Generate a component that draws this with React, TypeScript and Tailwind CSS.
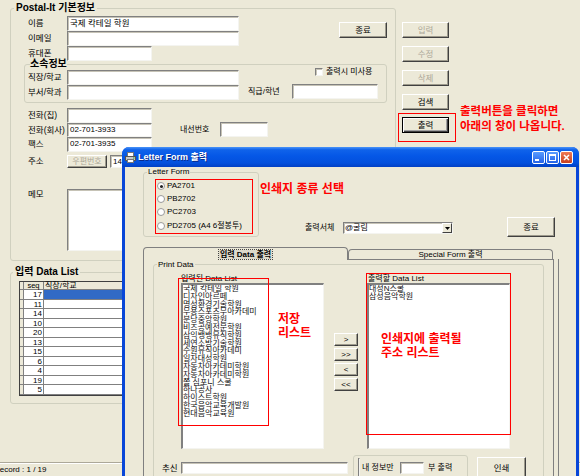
import React from "react";

const sunken =
  "bg-white border border-t-[#808080] border-l-[#808080] border-r-[#f4f4f0] border-b-[#f4f4f0] shadow-[inset_1px_1px_0_#c6c3b6]";

function Input({ className = "", children }: { className?: string; children?: React.ReactNode }) {
  return (
    <div
      className={
        "flex items-center overflow-hidden whitespace-nowrap pl-[2px] text-[8.5px] leading-none text-black " +
        sunken +
        " " +
        className
      }
    >
      {children}
    </div>
  );
}

function Btn({
  className = "",
  disabled = false,
  focused = false,
  children,
}: {
  className?: string;
  disabled?: boolean;
  focused?: boolean;
  children?: React.ReactNode;
}) {
  const frame = focused
    ? "border border-black shadow-[inset_1px_1px_0_#ffffff,inset_-1px_-1px_0_#404040,inset_-2px_-2px_0_#a0a0a0]"
    : "border border-t-white border-l-white border-r-[#404040] border-b-[#404040] shadow-[inset_-1px_-1px_0_#9d9a8c]";
  return (
    <div
      className={
        "flex items-center justify-center bg-[#ece9d8] text-[8.5px] leading-none whitespace-nowrap shrink-0 " +
        (disabled ? "text-[#aca899] " : "text-black ") +
        frame +
        " " +
        className
      }
    >
      {children}
    </div>
  );
}

function Check() {
  return <span className={"w-[8px] h-[8px] shrink-0 " + sunken} />;
}

function Radio({ checked = false }: { checked?: boolean }) {
  return (
    <span className="w-[8px] h-[8px] shrink-0 rounded-full border border-[#9a9a9a] bg-white flex items-center justify-center">
      {checked && <span className="w-[3px] h-[3px] rounded-full bg-[#222]" />}
    </span>
  );
}

const leftList = [
  "국제 칵테일 학원",
  "디자인아르떼",
  "명성환경기술학원",
  "무용스포츠무아카데미",
  "분당중앙학원",
  "비즈공예전문학원",
  "삼익뱅뱅뮤직학원",
  "세연소방기술학원",
  "수원뮤직아카데미",
  "일자대성학원",
  "자동차아카데미학원",
  "자동차아카데미학원",
  "쫄 심포니 스쿨",
  "하나공사",
  "하이스트학원",
  "한국음악교육개발원",
  "현대음악교육원",
];

const rightList = ["대성N스쿨", "삼성음악학원"];

const seqs = [17, 11, 14, 10, 20, 13, 15, 6, 4, 19, 5];

function Label({ children, className = "" }: { children: React.ReactNode; className?: string }) {
  return <span className={"text-[8.5px] leading-none whitespace-nowrap shrink-0 " + className}>{children}</span>;
}

function Dialog() {
  return (
    <div className="absolute left-[122px] top-[147px] w-[457px] h-[340px] flex flex-col rounded-t-[7px] overflow-hidden bg-[#0846d8]">
      {/* title bar */}
      <div className="h-[20px] shrink-0 flex items-center bg-[linear-gradient(180deg,#4a94f8_0%,#1063ea_14%,#0557e6_45%,#0350dd_80%,#0240c4_100%)]">
        <svg className="ml-[3px] shrink-0" width="11" height="11" viewBox="0 0 11 11">
          <rect x="2.5" y="0.5" width="6" height="4" fill="#fff" stroke="#777" />
          <rect x="0.5" y="4.5" width="10" height="4" fill="#c8c8c8" stroke="#555" />
          <rect x="2.5" y="7.5" width="6" height="3" fill="#fff" stroke="#777" />
          <rect x="8" y="5.5" width="1.5" height="1" fill="#3a3" />
        </svg>
        <span className="ml-[2px] text-white font-bold text-[9px] leading-none whitespace-nowrap [text-shadow:1px_1px_0_#0a2a8a]">
          Letter Form 출력
        </span>
        <div className="ml-auto mr-[6px] flex gap-[1px]">
          <div className="w-[13px] h-[13px] rounded-[2px] border border-white bg-[linear-gradient(180deg,#5a9cff,#2563e8)] flex items-end justify-start pl-[2px] pb-[2px]">
            <span className="w-[4px] h-[2px] bg-white" />
          </div>
          <div className="w-[13px] h-[13px] rounded-[2px] border border-white bg-[linear-gradient(180deg,#5a9cff,#2563e8)] flex items-center justify-center">
            <span className="w-[7px] h-[7px] border border-white border-t-2" />
          </div>
          <div className="w-[13px] h-[13px] rounded-[2px] border border-white bg-[linear-gradient(180deg,#f07a55,#c8401e)] flex items-center justify-center">
            <svg width="7" height="7" viewBox="0 0 7 7">
              <path d="M1 1 L6 6 M6 1 L1 6" stroke="#fff" strokeWidth="1.6" />
            </svg>
          </div>
        </div>
      </div>

      {/* client */}
      <div className="flex-1 mx-[3px] bg-[#ece9d8] flex flex-col">
        <div className="flex items-start">
          <fieldset className="ml-[18px] w-[116px] h-[70px] shrink-0 border border-[#d0d0bf] rounded-[3px]">
            <legend className="ml-[3px] px-[1px] text-[8px] leading-[10px]">Letter Form</legend>
            <div className="ml-[11px] mt-[2px] w-[98px] h-[55px] border border-[#ff0000] flex flex-col pl-[1px]">
              <div className="h-[12px] flex items-center gap-[2px]">
                <Radio checked />
                <span className="text-[8px] leading-none">PA2701</span>
              </div>
              <div className="h-[13px] flex items-center gap-[2px]">
                <Radio />
                <span className="text-[8px] leading-none">PB2702</span>
              </div>
              <div className="h-[14px] flex items-center gap-[2px]">
                <Radio />
                <span className="text-[8px] leading-none">PC2703</span>
              </div>
              <div className="h-[14px] flex items-center gap-[2px]">
                <Radio />
                <span className="text-[8px] leading-none whitespace-nowrap">PD2705 (A4 6절봉투)</span>
              </div>
            </div>
          </fieldset>
          <div className="ml-[1px] w-[194px] flex flex-col shrink-0">
            <div className="mt-[16px] text-[12px] font-bold leading-[12px] text-[#ff0000] whitespace-nowrap">
              인쇄지 종류 선택
            </div>
            <div className="mt-[27px] h-[12px] flex items-center">
              <span className="ml-[45px] w-[38px] text-[8px] leading-none whitespace-nowrap">출력서체</span>
              <div className={"w-[110px] h-[12px] flex items-center " + sunken}>
                <span className="flex-1 pl-[1px] text-[8px] leading-none">@굴림</span>
                <div className="w-[10px] h-[10px] bg-[#ece9d8] border border-t-white border-l-white border-r-[#404040] border-b-[#404040] flex items-center justify-center">
                  <svg width="5" height="3" viewBox="0 0 5 3">
                    <path d="M0 0 H5 L2.5 3 Z" fill="#000" />
                  </svg>
                </div>
              </div>
            </div>
          </div>
          <Btn className="ml-[53px] mt-[50px] w-[48px] h-[20px]">종료</Btn>
        </div>

        {/* tabs */}
        <div className="mt-[10px] ml-[18px] flex items-end h-[12px]">
          <div className="relative z-10 mb-[-1px] w-[205px] h-[13px] border border-b-0 border-[#7f7f7f] rounded-t-[4px] bg-[#ece9d8] flex items-center justify-center">
            <span className="px-[1px] text-[8px] font-bold leading-[9px] bg-[#dcd9cb] [outline:1px_dotted_#444]">
              입력 Data 출력
            </span>
          </div>
          <div className="w-[205px] h-[10px] border border-b-0 border-[#7f7f7f] rounded-t-[4px] bg-[#ece9d8] flex items-center justify-center">
            <span className="text-[8px] leading-none">Special Form 출력</span>
          </div>
        </div>

        {/* panel */}
        <div className="ml-[18px] w-[411px] flex-1 border border-[#7f7f7f] shadow-[4px_0_0_0_#ece9d8,5px_0_0_0_#808080] flex flex-col">
          <fieldset className="ml-[9px] w-[391px] h-[260px] border border-[#d0d0bf] rounded-[3px]">
            <legend className="ml-[3px] px-[1px] text-[8px] leading-[9px]">Print Data</legend>
            <div className="mt-[5px] flex items-start">
              {/* left list */}
              <div className="relative ml-[27px] flex flex-col">
                <span className="text-[8px] leading-[9px] whitespace-nowrap">입력된 Data List</span>
                <div className="w-[143px] h-[166px] bg-white border-t-2 border-l-2 border-t-[#808080] border-l-[#808080] border-r border-b border-r-[#f4f4f0] border-b-[#f4f4f0] overflow-hidden">
                  {leftList.map((t, i) => (
                    <div key={i} className="text-[8px] leading-[7.8px] whitespace-nowrap text-[#111]">
                      {t}
                    </div>
                  ))}
                </div>
                <div className="absolute left-[-3px] top-[4px] w-[91px] h-[148px] border border-[#ff0000]" />
                <div className="absolute left-[97px] top-[38px] text-[12px] font-bold leading-[14px] text-[#ff0000] whitespace-nowrap">
                  저장
                  <br />
                  리스트
                </div>
              </div>
              {/* arrows */}
              <div className="ml-[10px] mt-[59px] flex flex-col gap-[2px]">
                <Btn className="w-[24px] h-[13px] text-[8px]">&gt;</Btn>
                <Btn className="w-[24px] h-[13px] text-[8px]">&gt;&gt;</Btn>
                <Btn className="w-[24px] h-[13px] text-[8px]">&lt;</Btn>
                <Btn className="w-[24px] h-[13px] text-[8px]">&lt;&lt;</Btn>
              </div>
              {/* right list */}
              <div className="relative ml-[9px] flex flex-col">
                <span className="pl-[1px] text-[8px] leading-[9px] whitespace-nowrap">출력할 Data List</span>
                <div className="w-[143px] h-[166px] bg-white border-t-2 border-l-2 border-t-[#808080] border-l-[#808080] border-r border-b border-r-[#f4f4f0] border-b-[#f4f4f0] overflow-hidden">
                  {rightList.map((t, i) => (
                    <div key={i} className="text-[8px] leading-[8px] whitespace-nowrap text-[#111]">
                      {t}
                    </div>
                  ))}
                </div>
                <div className="absolute left-[-1px] top-[-1px] w-[145px] h-[162px] border border-[#ff0000]" />
                <div className="absolute left-[14px] top-[58px] text-[12px] font-bold leading-[14px] text-[#ff0000] whitespace-nowrap">
                  인쇄지에 출력될
                  <br />
                  주소 리스트
                </div>
              </div>
            </div>
            {/* bottom row */}
            <div className="mt-[6px] flex items-start">
              <span className="ml-[8px] w-[19px] mt-[9px] text-[8.5px] leading-[9px] whitespace-nowrap">추신</span>
              <Input className="mt-[7px] w-[167px] h-[12px]" />
              <div className="ml-[5px] w-[115px] h-[30px] border border-[#d0d0bf] rounded-[3px] flex items-start pt-[6px]">
                <div className="h-[12px] flex items-center">
                  <span className="ml-[4px]">
                    <Check />
                  </span>
                  <span className="ml-[2px] w-[38px] text-[8px] leading-none whitespace-nowrap">내 정보만</span>
                  <Input className="w-[24px] h-[12px]" />
                  <span className="ml-[4px] text-[8px] leading-none whitespace-nowrap">부 출력</span>
                </div>
              </div>
              <Btn className="ml-[9px] mt-[2px] w-[49px] h-[22px]">인쇄</Btn>
            </div>
          </fieldset>
        </div>
      </div>
    </div>
  );
}

export default function App() {
  return (
    <div className="relative w-[580px] h-[476px] overflow-hidden bg-[#ece9d8] flex flex-col text-black font-['Liberation_Sans','Noto_Sans_CJK_KR',sans-serif]">
      <div className="flex items-start">
        <fieldset className="mt-[1px] ml-[10px] w-[386px] h-[260px] shrink-0 border border-[#d0d0bf] rounded-[3px]">
          <legend className="ml-[3px] px-[2px] text-[10px] font-bold leading-[14px]">Postal-It 기본정보</legend>
          <div className="flex items-start">
            <div className="mt-[1px] flex flex-col">
              <div className="flex items-center h-[15px]">
                <Label className="w-[56px] pl-[17px]">이름</Label>
                <Input className="w-[172px] h-[15px]">국제 칵테일 학원</Input>
              </div>
              <div className="flex items-center h-[15px]">
                <Label className="w-[56px] pl-[17px]">이메일</Label>
                <Input className="w-[172px] h-[15px]" />
              </div>
              <div className="flex items-center h-[15px]">
                <Label className="w-[56px] pl-[17px]">휴대폰</Label>
                <Input className="w-[85px] h-[15px]" />
              </div>
            </div>
            <Btn className="ml-auto mr-[8px] mt-[7px] w-[48px] h-[16px]">종료</Btn>
          </div>

          <fieldset className="mt-[-3px] ml-[13px] w-[363px] h-[45px] border border-[#d0d0bf] rounded-[3px]">
            <legend className="ml-[5px] text-[10px] font-bold leading-[12px]">소속정보</legend>
            <div className="flex items-start">
              <div className="flex flex-col">
                <div className="flex items-center h-[15px]">
                  <Label className="w-[42px] pl-[3px]">직장/학교</Label>
                  <Input className="w-[172px] h-[15px]" />
                </div>
                <div className="flex items-center h-[15px]">
                  <Label className="w-[42px] pl-[3px]">부서/학과</Label>
                  <Input className="w-[172px] h-[15px]" />
                </div>
              </div>
              <div className="ml-[9px] flex flex-col">
                <div className="mt-[-3px] h-[10px] flex items-center pl-[67px] gap-[3px]">
                  <Check />
                  <Label className="text-[8px]">출력시 미사용</Label>
                </div>
                <div className="mt-[7px] flex items-center h-[15px]">
                  <Label className="w-[44px] text-[8px]">직급/학년</Label>
                  <Input className="w-[86px] h-[15px]" />
                </div>
              </div>
            </div>
          </fieldset>

          <div className="mt-[5px] flex flex-col">
            <div className="flex items-center h-[14.5px]">
              <Label className="w-[56px] pl-[17px]">전화(집)</Label>
              <Input className="w-[85px] h-[14.5px]" />
            </div>
            <div className="flex items-center h-[14.5px]">
              <Label className="w-[56px] pl-[17px]">전화(회사)</Label>
              <Input className="w-[85px] h-[14.5px] text-[8px]">02-701-3933</Input>
              <Label className="ml-[28px] w-[40px] text-[8px]">내선번호</Label>
              <Input className="w-[48px] h-[15px]" />
            </div>
            <div className="flex items-center h-[14.5px]">
              <Label className="w-[56px] pl-[17px]">팩스</Label>
              <Input className="w-[85px] h-[14.5px] text-[8px]">02-701-3935</Input>
            </div>
          </div>

          <div className="mt-[3.5px] flex items-center h-[13px]">
            <Label className="w-[56px] pl-[17px]">주소</Label>
            <Btn disabled className="w-[40px] h-[13px] text-[8px]">
              우편번호
            </Btn>
            <Input className="ml-[3px] w-[200px] h-[13px] text-[8px]">14</Input>
          </div>

          <div className="mt-[21px] flex items-start">
            <Label className="w-[56px] pl-[17px] mt-[1px]">메모</Label>
            <Input className="w-[300px] h-[62px]" />
          </div>
        </fieldset>

        <div className="ml-[6px] mt-[22px] flex flex-col">
          <Btn disabled className="w-[47px] h-[16px]">
            입력
          </Btn>
          <Btn disabled className="mt-[8px] w-[47px] h-[16px]">
            수정
          </Btn>
          <Btn disabled className="mt-[8px] w-[47px] h-[16px]">
            삭제
          </Btn>
          <Btn className="mt-[8px] w-[47px] h-[16px]">검색</Btn>
          <div className="mt-[3px] ml-[-4px] w-[58px] h-[29px] border border-[#ff0000] pt-[3px] pl-[3px]">
            <Btn focused className="w-[47px] h-[16px]">
              출력
            </Btn>
          </div>
        </div>

        <div className="ml-[4px] mt-[104px] text-[11.5px] font-bold leading-[15px] text-[#ff0000] whitespace-nowrap">
          출력버튼을 클릭하면
          <br />
          아래의 창이 나옵니다.
        </div>
      </div>

      <fieldset className="mt-[4px] ml-[10px] w-[560px] h-[139px] shrink-0 border border-[#d0d0bf] rounded-[3px]">
        <legend className="ml-[2px] px-[2px] text-[10px] font-bold leading-[14px]">입력 Data List</legend>
        <div className="mt-[2px] ml-[8px] w-[300px] border border-[#404040] bg-white flex flex-col">
          <div className="h-[8px] flex bg-[#ece9d8] border-b border-[#808080]">
            <span className="w-[4px] border-r border-[#808080]" />
            <span className="w-[20px] border-r border-[#808080] text-[7.5px] leading-[8px] text-center">seq</span>
            <span className="flex-1 pl-[1px] text-[8px] leading-[8px]">직장/학교</span>
          </div>
          {seqs.map((n, i) => (
            <div key={i} className="h-[9.5px] flex border-b border-[#808080]">
              <span className="w-[4px] bg-[#ece9d8] border-r border-[#808080]" />
              <span className="w-[20px] border-r border-[#808080] text-[8px] leading-[9px] text-right pr-[1px]">{n}</span>
              <span className={"flex-1 " + (i === 0 ? "bg-[#316ac5]" : "bg-white")} />
            </div>
          ))}
        </div>
      </fieldset>

      <div className="mt-auto h-[14px] shrink-0 border-t border-[#aca899] shadow-[inset_0_1px_0_#ffffff] flex items-center overflow-hidden">
        <span className="ml-[-6px] text-[8px] leading-none whitespace-nowrap">Record : 1 / 19</span>
      </div>

      <Dialog />
    </div>
  );
}
